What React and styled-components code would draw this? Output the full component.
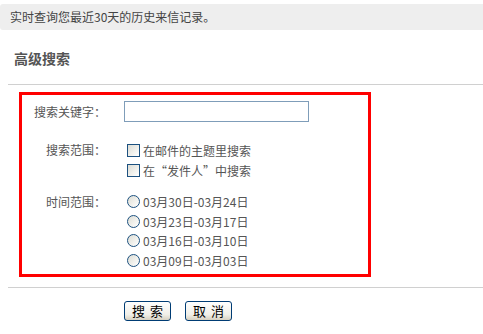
import React from "react"
import styled, { createGlobalStyle } from "styled-components"

const GlobalStyle = createGlobalStyle`
  body {
    margin: 0;
    background: #fff;
    font-family: "Noto Sans CJK SC", "DejaVu Sans", sans-serif;
    font-size: 12px;
    color: #555;
  }
`

const Page = styled.div`
  width: 483px;
  height: 334px;
  padding-top: 4px;
  box-sizing: border-box;
  overflow: hidden;
`

const Notice = styled.div`
  height: 26px;
  line-height: 25px;
  background: #eeeeee;
  border-radius: 3px 0 0 3px;
  padding-left: 10px;
  color: #444;
`

const Title = styled.h2`
  margin: 0;
  padding: 20px 0 0 14px;
  height: 34px;
  font-size: 14px;
  font-weight: bold;
  line-height: 16px;
  color: #555;
`

const Rule = styled.div`
  margin: ${(p) => p.$top || 0}px 0 0 8px;
  border-top: 1px solid #d0d0d0;
`

const SearchBox = styled.div`
  margin: 7px 0 0 19px;
  width: 352px;
  height: 185px;
  box-sizing: border-box;
  border: 3px solid #ff0000;
  padding-top: 6px;
`

const Row = styled.div`
  display: grid;
  grid-template-columns: 84px 1fr;
  column-gap: 18px;
  margin-top: ${(p) => p.$top || 0}px;
`

const Label = styled.div`
  text-align: right;
  line-height: ${(p) => p.$lh || 20}px;
  white-space: nowrap;
`

const Options = styled.div`
  display: flex;
  flex-direction: column;
`

const KeywordInput = styled.input`
  width: 185px;
  height: 21px;
  box-sizing: border-box;
  border: 1px solid #7f9db9;
  margin: 0;
  padding: 0 3px;
  font: inherit;
`

const Option = styled.label`
  display: flex;
  align-items: center;
  height: ${(p) => p.$h || 20}px;
  gap: 3px;
  padding-left: 3px;
  white-space: nowrap;
`

const Box = styled.span`
  display: inline-block;
  width: 13px;
  height: 13px;
  box-sizing: border-box;
  border: 1px solid #1c5180;
  border-radius: ${(p) => (p.$round ? "50%" : "0")};
  background: linear-gradient(135deg, #dcdcd4 0%, #f2f2ee 60%, #ffffff 100%);
  flex: none;
`

const Footer = styled.div`
  display: flex;
  gap: 14px;
  padding: 13px 0 0 124px;
`

const Button = styled.button`
  width: 47px;
  height: 20px;
  box-sizing: border-box;
  border: 1px solid #003c74;
  border-radius: 3px;
  background: linear-gradient(#ffffff, #f0efe8 70%, #d6d0c0);
  font-family: "Noto Sans CJK SC", sans-serif;
  font-size: 13px;
  line-height: 16px;
  color: #000;
  padding: 0;
  letter-spacing: 5px;
  text-indent: 5px;
`

const dates = [
  "03月30日-03月24日",
  "03月23日-03月17日",
  "03月16日-03月10日",
  "03月09日-03月03日",
]

export default function App() {
  return (
    <Page>
      <GlobalStyle />
      <Notice>实时查询您最近30天的历史来信记录。</Notice>
      <Title>高级搜索</Title>
      <Rule />
      <SearchBox>
        <Row>
          <Label $lh={21}>搜索关键字：</Label>
          <div>
            <KeywordInput type="text" />
          </div>
        </Row>
        <Row $top={18}>
          <Label>搜索范围：</Label>
          <Options>
            <Option>
              <Box />
              在邮件的主题里搜索
            </Option>
            <Option>
              <Box />
              在“发件人”中搜索
            </Option>
          </Options>
        </Row>
        <Row $top={12}>
          <Label $lh={19.5}>时间范围：</Label>
          <Options>
            {dates.map((d) => (
              <Option key={d} $h={19.5}>
                <Box $round />
                {d}
              </Option>
            ))}
          </Options>
        </Row>
      </SearchBox>
      <Rule $top={10} />
      <Footer>
        <Button>搜索</Button>
        <Button>取消</Button>
      </Footer>
    </Page>
  )
}
